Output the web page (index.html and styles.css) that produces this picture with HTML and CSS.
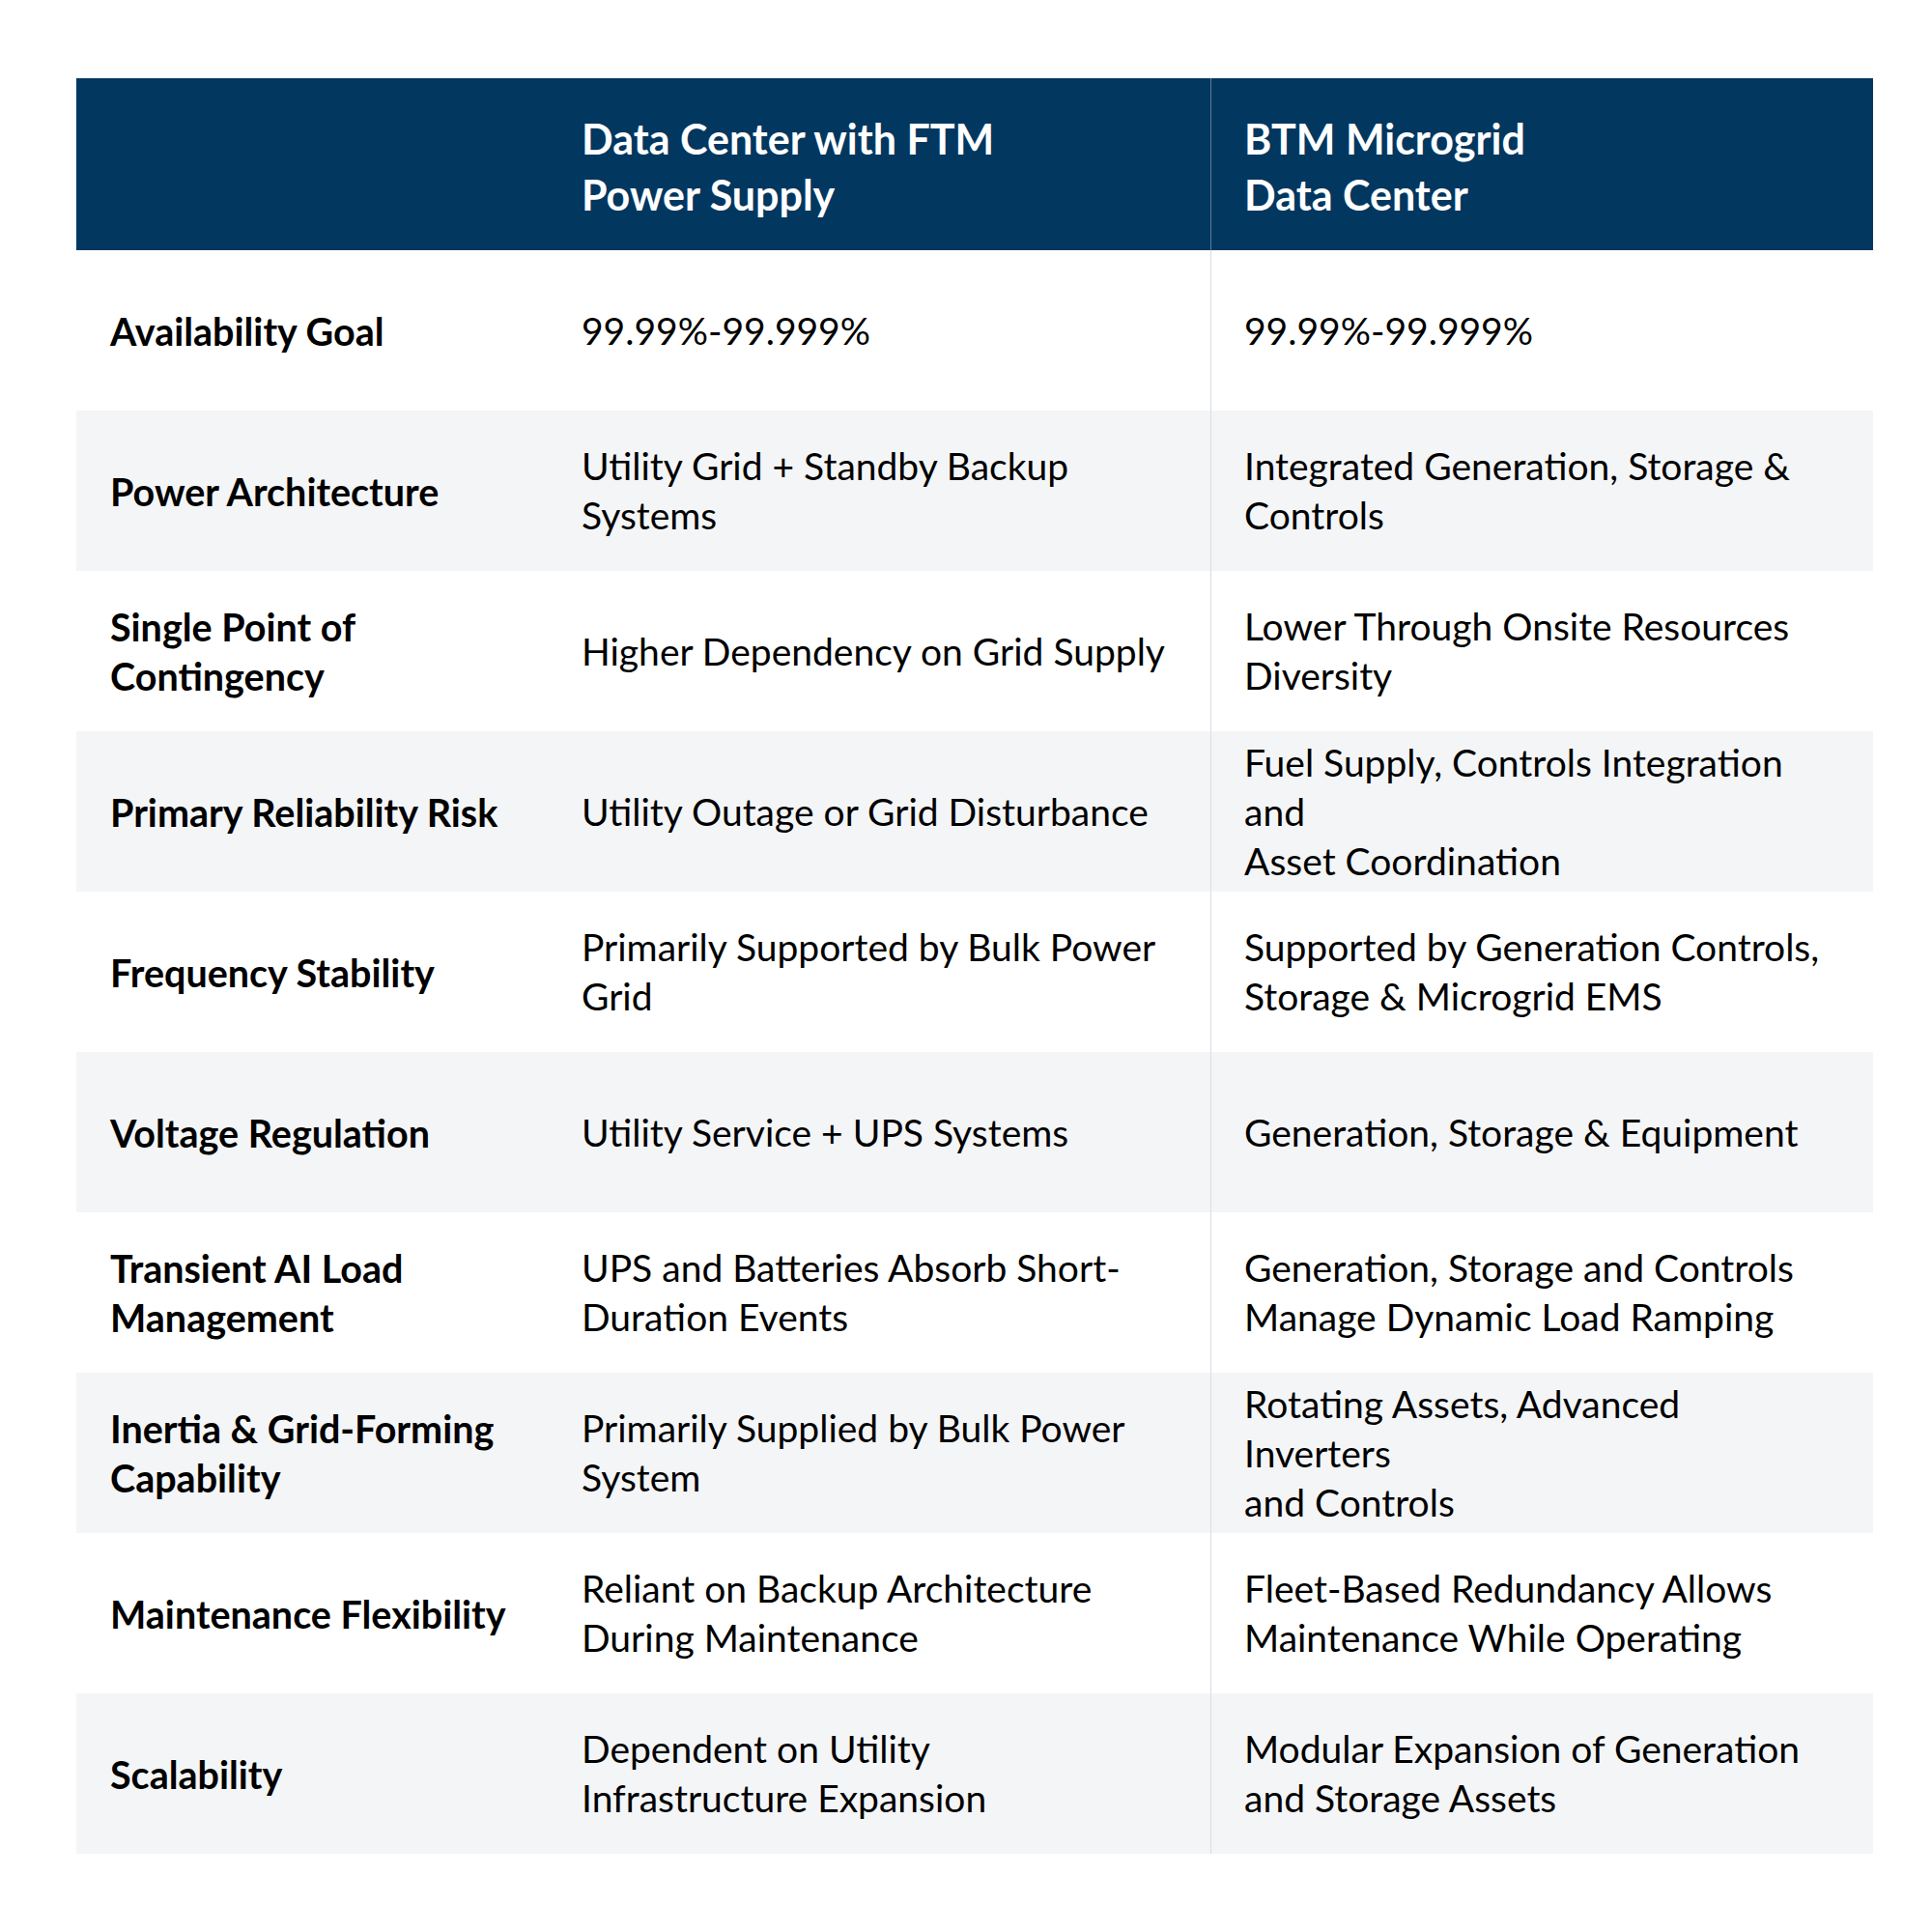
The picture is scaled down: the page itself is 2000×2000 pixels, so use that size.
FILE: index.html
```html
<!DOCTYPE html>
<html lang="en">
<head>
<meta charset="utf-8">
<title>FTM vs BTM Data Center Comparison</title>
<link rel="stylesheet" href="styles.css">
</head>
<body>
<div class="page">
  <div class="table">
    <div class="row head">
      <div class="cell label"></div>
      <div class="cell">Data Center with FTM<br>Power Supply</div>
      <div class="cell last">BTM Microgrid<br>Data Center</div>
    </div>
    <div class="row">
      <div class="cell label">Availability Goal</div>
      <div class="cell">99.99%-99.999%</div>
      <div class="cell last">99.99%-99.999%</div>
    </div>
    <div class="row alt">
      <div class="cell label">Power Architecture</div>
      <div class="cell">Utility Grid + Standby Backup<br>Systems</div>
      <div class="cell last">Integrated Generation, Storage &amp;<br>Controls</div>
    </div>
    <div class="row">
      <div class="cell label">Single Point of<br>Contingency</div>
      <div class="cell">Higher Dependency on Grid Supply</div>
      <div class="cell last">Lower Through Onsite Resources<br>Diversity</div>
    </div>
    <div class="row alt">
      <div class="cell label">Primary Reliability Risk</div>
      <div class="cell">Utility Outage or Grid Disturbance</div>
      <div class="cell last">Fuel Supply, Controls Integration<br>and<br>Asset Coordination</div>
    </div>
    <div class="row">
      <div class="cell label">Frequency Stability</div>
      <div class="cell">Primarily Supported by Bulk Power<br>Grid</div>
      <div class="cell last">Supported by Generation Controls,<br>Storage &amp; Microgrid EMS</div>
    </div>
    <div class="row alt">
      <div class="cell label">Voltage Regulation</div>
      <div class="cell">Utility Service + UPS Systems</div>
      <div class="cell last">Generation, Storage &amp; Equipment</div>
    </div>
    <div class="row">
      <div class="cell label">Transient AI Load<br>Management</div>
      <div class="cell">UPS and Batteries Absorb Short-<br>Duration Events</div>
      <div class="cell last">Generation, Storage and Controls<br>Manage Dynamic Load Ramping</div>
    </div>
    <div class="row alt">
      <div class="cell label">Inertia &amp; Grid-Forming<br>Capability</div>
      <div class="cell">Primarily Supplied by Bulk Power<br>System</div>
      <div class="cell last">Rotating Assets, Advanced<br>Inverters<br>and Controls</div>
    </div>
    <div class="row">
      <div class="cell label">Maintenance Flexibility</div>
      <div class="cell">Reliant on Backup Architecture<br>During Maintenance</div>
      <div class="cell last">Fleet-Based Redundancy Allows<br>Maintenance While Operating</div>
    </div>
    <div class="row alt">
      <div class="cell label">Scalability</div>
      <div class="cell">Dependent on Utility<br>Infrastructure Expansion</div>
      <div class="cell last">Modular Expansion of Generation<br>and Storage Assets</div>
    </div>
  </div>
</div>
</body>
</html>
```
FILE: styles.css
```css
html, body {
  margin: 0;
  padding: 0;
  background: #ffffff;
}
.page {
  width: 2000px;
  height: 2000px;
  padding: 81px 61px 0 79px;
  box-sizing: border-box;
  font-family: "Lato", "Liberation Sans", sans-serif;
  color: #000000;
}
.table {
  display: flex;
  flex-direction: column;
  width: 1860px;
}
.row {
  display: grid;
  grid-template-columns: 488px 686px 686px;
  height: 166px;
  background: #ffffff;
}
.row.alt {
  background: #f4f5f7;
}
.row.head {
  height: 178px;
  background: #023760;
  color: #ffffff;
}
.cell {
  display: flex;
  align-items: center;
  padding: 0 10px 0 35px;
  font-size: 39px;
  line-height: 51px;
  white-space: nowrap;
  box-sizing: border-box;
}
.row.head .cell {
  font-size: 43px;
  font-weight: 700;
  line-height: 58px;
  padding-top: 5px;
}
.cell.label {
  font-size: 39.5px;
  font-weight: 700;
}
.cell.last {
  border-left: 1px solid #d9dde3;
  padding-left: 34px;
}
.row.head .cell.last {
  border-left-color: #5d7c99;
}
```
